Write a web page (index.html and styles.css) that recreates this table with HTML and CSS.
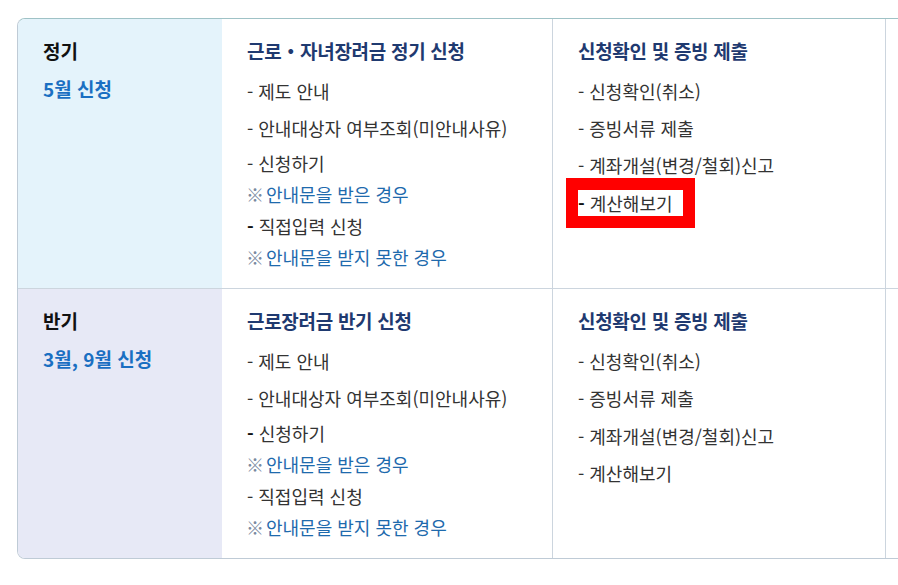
FILE: index.html
```html
<!DOCTYPE html>
<html lang="ko">
<head>
<meta charset="utf-8">
<link rel="stylesheet" href="styles.css">
</head>
<body>
<div class="table">
  <div class="cell head head-1">
    <div class="kind">정기</div>
    <div class="period">5월 신청</div>
  </div>
  <div class="cell">
    <h3 class="title">근로・자녀장려금 정기 신청</h3>
    <ul class="list">
      <li class="item">- 제도 안내</li>
      <li class="item">- 안내대상자 여부조회(미안내사유)</li>
      <li class="item item-tight">- 신청하기</li>
      <li class="note"><span class="ref">※</span>안내문을 받은 경우</li>
      <li class="item item-sub"><b class="dash">-</b> 직접입력 신청</li>
      <li class="note"><span class="ref">※</span>안내문을 받지 못한 경우</li>
    </ul>
  </div>
  <div class="cell">
    <h3 class="title">신청확인 및 증빙 제출</h3>
    <ul class="list">
      <li class="item">- 신청확인(취소)</li>
      <li class="item">- 증빙서류 제출</li>
      <li class="item">- 계좌개설(변경/철회)신고</li>
      <li class="item item-wide"><span class="mark"><b class="dash">-</b> 계산해보기</span></li>
    </ul>
  </div>
  <div class="cell last"></div>

  <div class="cell head head-2 bottom">
    <div class="kind">반기</div>
    <div class="period">3월, 9월 신청</div>
  </div>
  <div class="cell bottom">
    <h3 class="title">근로장려금 반기 신청</h3>
    <ul class="list">
      <li class="item">- 제도 안내</li>
      <li class="item">- 안내대상자 여부조회(미안내사유)</li>
      <li class="item item-tight"><b class="dash">-</b> 신청하기</li>
      <li class="note"><span class="ref">※</span>안내문을 받은 경우</li>
      <li class="item item-sub">- 직접입력 신청</li>
      <li class="note"><span class="ref">※</span>안내문을 받지 못한 경우</li>
    </ul>
  </div>
  <div class="cell bottom">
    <h3 class="title">신청확인 및 증빙 제출</h3>
    <ul class="list">
      <li class="item">- 신청확인(취소)</li>
      <li class="item">- 증빙서류 제출</li>
      <li class="item item-wide">- 계좌개설(변경/철회)신고</li>
      <li class="item">- 계산해보기</li>
    </ul>
  </div>
  <div class="cell last bottom"></div>
</div>
</body>
</html>
```
FILE: styles.css
```css
html, body {
  margin: 0;
  padding: 0;
  overflow: hidden;
  background: #ffffff;
}
body {
  padding: 18px 0 0 17px;
  font-family: "Noto Sans CJK KR", "Noto Sans", sans-serif;
  color: #333333;
}
.table {
  width: 1100px;
  display: grid;
  grid-template-columns: 204px 331px 333px 1fr;
  grid-template-rows: 270px 269px;
  border: 1px solid #bfcbd6;
  border-top-color: #9fc2c6;
  border-radius: 8px 0 0 8px;
  overflow: hidden;
}
.cell {
  padding: 19px 25px 0;
  border-right: 1px solid #ccd5de;
  border-bottom: 1px solid #ccd5de;
  background: #ffffff;
}
.cell.bottom {
  border-bottom: none;
}
.cell.last {
  border-right: none;
}
.head {
  border-right: none;
}
.head-1 {
  background: #e4f3fb;
}
.head-2 {
  background: #e7e9f6;
}
.kind {
  font-size: 19px;
  line-height: 26px;
  font-weight: 700;
  color: #111111;
}
.period {
  margin-top: 12px;
  font-size: 19px;
  line-height: 26px;
  font-weight: 700;
  color: #1a6fc2;
}
.title {
  margin: 0;
  font-size: 19px;
  line-height: 26px;
  font-weight: 700;
  color: #1f3a70;
  letter-spacing: -0.3px;
}
.list {
  list-style: none;
  margin: 14px 0 0;
  padding: 0;
}
.item {
  font-size: 18px;
  line-height: 26px;
  color: #333333;
  margin-top: 11px;
}
.item:first-child {
  margin-top: 0;
}
.item-tight {
  margin-top: 9px;
}
.item-wide {
  margin-top: 12px;
}
.item-sub {
  margin-top: 6px;
}
.note {
  font-size: 18px;
  line-height: 26px;
  color: #1e6aad;
  margin-top: 5px;
}
.ref {
  color: #7a8aa0;
  margin-left: -1px;
  margin-right: 2px;
}
.dash {
  font-weight: 700;
  color: #111111;
}
.mark {
  display: inline-block;
  background: #ffffff;
  outline: 12px solid #ff0000;
  padding-right: 10px;
}
```
